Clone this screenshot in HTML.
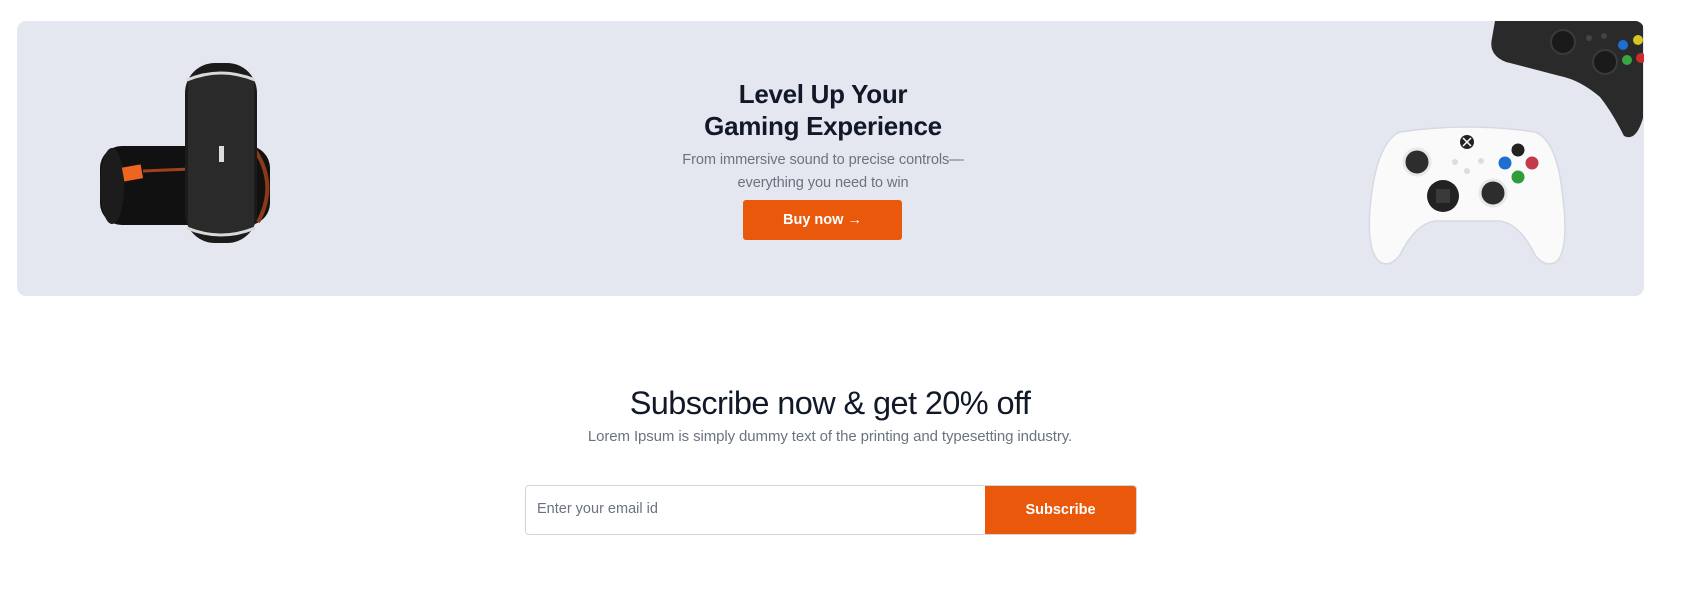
<!DOCTYPE html>
<html><head><meta charset="utf-8"><style>
*{margin:0;padding:0;box-sizing:border-box}
body{width:1688px;height:611px;background:#fff;font-family:"Liberation Sans",sans-serif;position:relative;overflow:hidden}
.banner{position:absolute;left:17px;top:21px;width:1627px;height:275px;background:#e5e7f0;border-radius:9px;overflow:hidden}
.h{position:absolute;left:0;width:1646px;text-align:center;color:#111827}
.t1{top:78px;font-size:26px;font-weight:bold;line-height:32px;letter-spacing:-0.3px}
.sub{top:149px;font-size:14.6px;line-height:23px;color:#6b7280;letter-spacing:-0.1px}
.btn{position:absolute;left:743px;top:200px;width:159px;height:40px;background:#ea580c;border-radius:3px;color:#fff;font-size:14.5px;font-weight:bold;text-align:center;line-height:40px}
.s{width:1660px}
.s1{top:383px;font-size:32.5px;line-height:40px;letter-spacing:-0.6px}
.s2{top:428px;font-size:15px;color:#6b7280;letter-spacing:-0.1px}
.inp{position:absolute;left:525px;top:485px;width:612px;height:50px;border:1px solid #d1d5db;border-radius:4px;background:#fff;overflow:hidden}
.inp span{position:absolute;left:11px;top:15px;font-size:14.5px;color:#6b7280}
.inp b{position:absolute;right:0;top:-1px;width:151px;height:50px;background:#ea580c;color:#fff;font-size:14.5px;text-align:center;line-height:50px}
svg{position:absolute;left:0;top:0}
</style></head><body>
<div class="banner"></div>
<svg width="1688" height="611">
<defs><clipPath id="c"><rect x="17" y="21" width="1627" height="275" rx="9"/></clipPath></defs>
<rect x="100" y="146" width="170" height="79" rx="22" fill="#111"/>
<ellipse cx="112" cy="186" rx="12" ry="38" fill="#1c1c1c"/>
<rect x="123" y="166" width="19" height="14" fill="#f06422" transform="rotate(-10 132 173)"/>
<line x1="143" y1="171" x2="190" y2="169" stroke="#a3401c" stroke-width="3"/>
<path d="M255 150 Q278 185 258 222" stroke="#8a3a18" stroke-width="4" fill="none"/>
<rect x="185" y="63" width="72" height="180" rx="30" fill="#1b1b1b"/>
<rect x="188" y="75" width="66" height="158" rx="8" fill="#2a2a2a"/>
<path d="M187 80 Q221 66 255 80" stroke="#d9d9d9" stroke-width="3" fill="none"/>
<path d="M187 228 Q221 242 255 228" stroke="#d9d9d9" stroke-width="3" fill="none"/>
<rect x="219" y="146" width="5" height="16" fill="#ddd"/>
<g clip-path="url(#c)">
<path d="M1495 21 L1643 21 L1643 118 Q1636 142 1624 136 Q1612 112 1600 97 Q1580 80 1560 76 Q1530 68 1506 62 Q1488 55 1492 38 Z" fill="#2a2a2a"/>
<circle cx="1563" cy="42" r="12" fill="#1a1a1a" stroke="#3a3a3a" stroke-width="2"/>
<circle cx="1605" cy="62" r="12" fill="#1a1a1a" stroke="#3a3a3a" stroke-width="2"/>
<circle cx="1589" cy="38" r="3" fill="#444"/><circle cx="1604" cy="36" r="3" fill="#444"/>
<circle cx="1623" cy="45" r="5" fill="#1e6fd0"/><circle cx="1638" cy="40" r="5" fill="#d6c820"/>
<circle cx="1627" cy="60" r="5" fill="#3aa640"/><circle cx="1641" cy="58" r="5" fill="#cc2b2b"/>
</g>
<path d="M1400 132 Q1467 122 1535 132 Q1556 140 1562 190 Q1570 250 1556 262 Q1545 268 1535 255 Q1520 224 1500 221 L1435 221 Q1415 224 1400 255 Q1390 268 1380 262 Q1364 250 1372 190 Q1380 140 1400 132 Z" fill="#fafafa" stroke="#d6d9e2" stroke-width="1.5"/>
<circle cx="1417" cy="162" r="13" fill="#2d2d2d" stroke="#e8e8e8" stroke-width="3"/>
<circle cx="1493" cy="193" r="13" fill="#2d2d2d" stroke="#e8e8e8" stroke-width="3"/>
<circle cx="1443" cy="196" r="16" fill="#222"/>
<rect x="1436" y="189" width="14" height="14" fill="#3a3a3a"/>
<circle cx="1467" cy="142" r="7" fill="#222"/>
<path d="M1463 138 L1471 146 M1471 138 L1463 146" stroke="#fff" stroke-width="1.5"/>
<circle cx="1455" cy="162" r="3" fill="#ddd"/><circle cx="1481" cy="161" r="3" fill="#ddd"/><circle cx="1467" cy="171" r="3" fill="#ddd"/>
<circle cx="1518" cy="150" r="6.5" fill="#222"/><circle cx="1505" cy="163" r="6.5" fill="#1e6fd0"/>
<circle cx="1532" cy="163" r="6.5" fill="#c43a4a"/><circle cx="1518" cy="177" r="6.5" fill="#2f9e3a"/>
</svg>
<div class="h t1">Level Up Your<br>Gaming Experience</div>
<div class="h sub">From immersive sound to precise controls—<br>everything you need to win</div>
<div class="btn">Buy now →</div>
<div class="h s s1">Subscribe now &amp; get 20% off</div>
<div class="h s s2">Lorem Ipsum is simply dummy text of the printing and typesetting industry.</div>
<div class="inp"><span>Enter your email id</span><b>Subscribe</b></div>
</body></html>
